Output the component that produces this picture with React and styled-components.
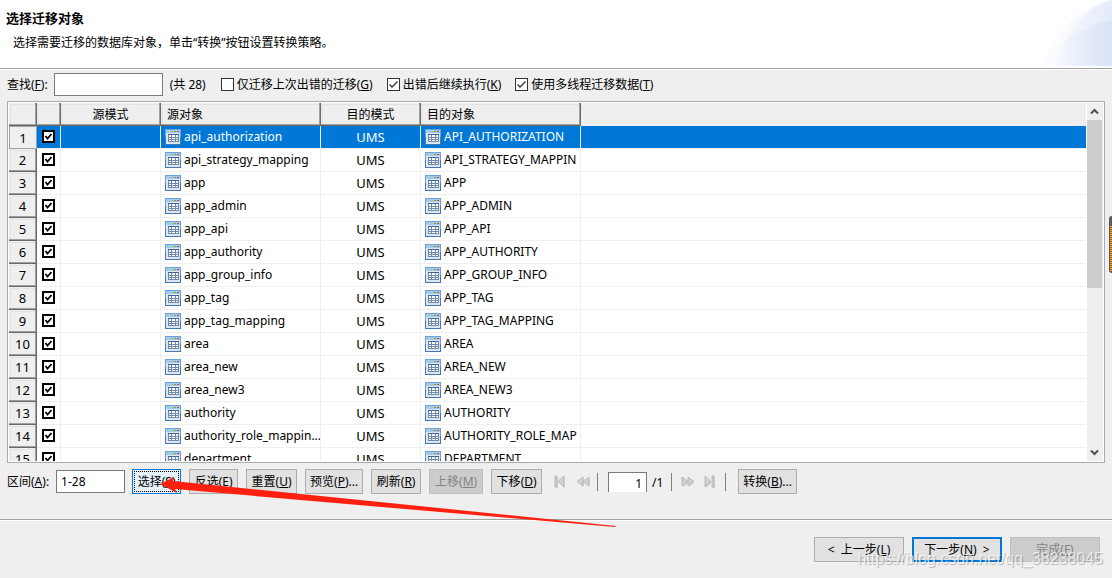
import React, { useState } from 'react'
import styled, { createGlobalStyle, css } from 'styled-components'

const GlobalStyle = createGlobalStyle`
    *, *::before, *::after {
        box-sizing: border-box;
    }

    body {
        margin: 0;
        background-color: #efefef;
        color: black;
        font-family: 'Noto Sans', 'Noto Sans CJK SC', sans-serif;
        font-size: 12px;
        line-height: 16px;
    }

    button, input {
        font: inherit;
        color: inherit;
        margin: 0;
    }
`;

const Wizard = styled.div`
    position: relative;
    display: flex;
    flex-direction: column;
    height: 100vh;
    overflow: hidden;
`;

const Banner = styled.header`
    display: flex;
    justify-content: space-between;
    height: 69px;
    flex: none;
    background-color: white;
    border-bottom: 1px solid #a0a0a0;
`;

const BannerText = styled.div`
    padding: 10px 0 0 6px;
`;

const Title = styled.h1`
    margin: 0 0 9px;
    font-size: 13px;
    line-height: 16px;
    font-weight: bold;
`;

const Subtitle = styled.p`
    margin: 0;
    padding-left: 7px;
`;

const FilterBar = styled.div`
    display: flex;
    align-items: center;
    flex: none;
    height: 32px;
    padding: 0 7px 2px;
    border-top: 1px solid white;
`;

const TextBox = styled.input`
    width: ${props => props.$w};
    height: 23px;
    margin: ${props => props.$margin};
    padding: 0 4px;
    border: 1px solid #7a7a7a;
    background-color: white;
    outline: none;
`;

const Count = styled.span`
    width: 51px;
`;

const CheckLabel = styled.label`
    display: flex;
    align-items: center;
    gap: 3px;
    margin-right: 14px;
    white-space: nowrap;
`;

const CheckBox = styled.span`
    display: grid;
    width: 13px;
    height: 13px;

    input, svg {
        grid-area: 1 / 1;
        width: 13px;
        height: 13px;
    }

    input {
        appearance: none;
        background-color: white;
        border: ${props => props.$heavy ? '2px solid black' : '1px solid #333'};
    }

    svg {
        pointer-events: none;
    }
`;

const GridPanel = styled.div`
    display: flex;
    flex: 1;
    min-height: 0;
    margin: 0 7px;
    padding: 1px;
    border: 1px solid #a9abb0;
    background-color: white;
`;

const GridView = styled.div`
    flex: 1;
    min-width: 0;
    overflow: hidden;
`;

const Table = styled.table`
    width: 100%;
    table-layout: fixed;
    border-collapse: separate;
    border-spacing: 0;
`;

const raised = css`
    background-color: #efefef;
    border-style: solid;
    border-width: 0 1px 1px 0;
    border-color: #696969;
    box-shadow: inset -1px -1px #a0a0a0, inset 1px 1px #efefef, inset 2px 2px #e3e3e3;
`;

const HeadCell = styled.th`
    height: 23px;
    padding: 2px 6px 0;
    font-weight: normal;
    text-align: ${props => props.$align || 'left'};
    ${props => props.$blank ? 'background-color: #efefef;' : raised}
`;

const Row = styled.tr`
    background-color: ${props => props.$selected ? '#0078d7' : 'white'};
    color: ${props => props.$selected ? 'white' : 'black'};
`;

const NumberCell = styled.th`
    height: 23px;
    padding: 0;
    color: black;
    font-size: 13px;
    font-weight: normal;
    line-height: 16px;
    ${raised}
    ${props => props.$selected && css`
        border-width: 1px;
        border-color: #a0a0a0;
        box-shadow: none;
    `}
`;

const Cell = styled.td`
    height: 23px;
    padding: 0;
    border-right: ${props => props.$last ? 'none' : '1px solid #efefef'};
    border-bottom: 1px solid #efefef;
    text-align: ${props => props.$align || 'left'};
    font-size: ${props => props.$size || '12px'};
    white-space: nowrap;
    overflow: hidden;
`;

const Tick = styled.div`
    padding: 0 0 1px 5px;
`;

const ObjectName = styled.div`
    display: flex;
    align-items: center;
    gap: 3px;
    padding-left: 4px;

    svg {
        flex: none;
    }
`;

const ScrollBar = styled.div`
    display: flex;
    flex-direction: column;
    width: 16px;
    margin: 0 0 0 1px;
    padding-right: 1px;
    background-color: #efefef;
`;

const ScrollButton = styled.button`
    display: grid;
    place-items: center;
    height: 17px;
    padding: 0;
    border: none;
    background: none;
`;

const ScrollTrack = styled.div`
    flex: 1;
`;

const ScrollThumb = styled.div`
    width: 15px;
    height: 52%;
    background-color: #cdcdcd;
`;

const ToolBar = styled.div`
    display: flex;
    align-items: center;
    flex: none;
    height: 56px;
    padding: 0 7px 19px;
`;

const ButtonGroup = styled.div`
    display: flex;
    gap: 8px;
`;

const Button = styled.button`
    width: ${props => props.$w};
    height: 25px;
    padding: 0;
    border: 1px solid #adadad;
    background-color: #e1e1e1;
    white-space: nowrap;

    ${props => props.$focused && css`
        border-color: #0078d7;
        background-color: #e5f1fb;
        outline: 1px dotted black;
        outline-offset: -3px;
    `}

    ${props => props.$primary && css`
        border: 2px solid #0078d7;
    `}

    &:disabled {
        border-color: #bfbfbf;
        background-color: #cccccc;
        color: #838383;
    }
`;

const Pager = styled.div`
    display: flex;
    align-items: center;
    margin: 0 12px 0 7px;
`;

const PagerButton = styled.button`
    display: grid;
    place-items: center;
    width: 23px;
    height: 20px;
    padding: 0;
    border: none;
    background: none;
`;

const Divider = styled.span`
    width: 1px;
    height: 18px;
    margin: ${props => props.$margin};
    background-color: #808080;
`;

const PageBox = styled.input`
    width: 39px;
    height: 20px;
    padding: 2px 4px 0;
    border: 1px solid #7a7a7a;
    border-bottom: none;
    background-color: white;
    text-align: right;
    outline: none;
`;

const PageTotal = styled.span`
    width: 24px;
    padding: 2px 0 0 5px;
`;

const Footer = styled.footer`
    display: flex;
    justify-content: flex-end;
    flex: none;
    gap: 8px;
    height: 59px;
    padding: 17px 12px 0;
    border-top: 1px solid #a0a0a0;
    box-shadow: inset 0 1px white;
`;

const PointerArrow = styled.svg`
    position: absolute;
    left: 160px;
    bottom: 50px;
    pointer-events: none;
`;

const Watermark = styled.div`
    position: absolute;
    right: 9px;
    bottom: 9px;
    font-family: 'Liberation Sans', sans-serif;
    font-size: 16px;
    line-height: 20px;
    color: rgba(255, 255, 255, 0.7);
    text-shadow: 1px 1px 1px rgba(0, 0, 0, 0.25);
    pointer-events: none;
`;

const SideMeter = styled.div`
    position: absolute;
    right: 0;
    top: 216px;
    width: 3px;
    height: 57px;
    padding: 10px 0 2px 1px;
    border-radius: 3px 0 0 3px;
    background-color: #5a5a5a;

    &::before {
        content: '';
        display: block;
        height: 100%;
        background: repeating-linear-gradient(#ff9a1a 0 1px, #8a6a35 1px 2px);
    }
`;

function BannerArt() {
    return (
        <svg width="74" height="66" viewBox="0 0 74 66" aria-hidden="true">
            <defs>
                <linearGradient id="fade" x1="14" x2="74" y1="0" y2="0" gradientUnits="userSpaceOnUse">
                    <stop offset="0" stopColor="#c9d7f2" stopOpacity="0" />
                    <stop offset="1" stopColor="#c9d7f2" stopOpacity="0.38" />
                </linearGradient>
                <linearGradient id="haze" x1="0" x2="74" y1="0" y2="0" gradientUnits="userSpaceOnUse">
                    <stop offset="0" stopColor="#e8eefb" stopOpacity="0.1" />
                    <stop offset="1" stopColor="#e8eefb" stopOpacity="0.5" />
                </linearGradient>
            </defs>
            <path d="M2 66C14 36 38 8 74 0V66Z" fill="url(#haze)" />
            <path d="M18 66C26 36 44 10 70 1L74 0V66Z" fill="url(#fade)" />
            <path d="M2 66C20 42 44 25 74 21V66Z" fill="url(#fade)" />
        </svg>
    )
}

function TableIcon() {
    return (
        <svg width="16" height="16" viewBox="0 0 16 16" aria-hidden="true" shapeRendering="crispEdges">
            <rect width="16" height="8" fill="#6fa3d8" />
            <rect y="8" width="16" height="8" fill="#4478b2" />
            <rect x="1" y="1" width="14" height="3" fill="#9fcaf2" />
            <rect x="1" y="4" width="14" height="11" fill="#dfe5ec" />
            <rect x="6" y="2" width="2" height="1" fill="#d9b93a" />
            <rect x="9" y="2" width="2" height="1" fill="#6aa84f" />
            <rect x="12" y="2" width="2" height="1" fill="#e03a2e" />
            <rect x="3" y="5" width="11" height="8" fill="#6d89ab" />
            <rect x="3" y="5" width="11" height="1" fill="#3d679c" />
            <path d="M4 6h2v2H4zM7 6h3v2H7zM11 6h2v2h-2zM4 9h2v1H4zM7 9h3v1H7zM11 9h2v1h-2zM4 11h2v1H4zM7 11h3v1H7zM11 11h2v1h-2z" fill="white" />
        </svg>
    )
}

function Check({ id, label, heavy, defaultChecked }) {

    const [checked, setChecked] = useState(!!defaultChecked);

    return (
        <CheckBox $heavy={heavy}>
            <input id={id} type="checkbox" aria-label={label} checked={checked} onChange={() => setChecked(!checked)} />
            {checked && (
                <svg viewBox="0 0 13 13">
                    {heavy
                        ? <path d="M3.5 6L5.5 8.5L9.5 4" fill="none" stroke="black" strokeWidth="1.8" />
                        : <path d="M2.5 6.5L5 9L10.5 3.5" fill="none" stroke="#333" strokeWidth="1.3" />}
                </svg>
            )}
        </CheckBox>
    )
}

function Chevron({ d }) {
    return (
        <svg width="9" height="7" viewBox="0 0 9 7" aria-hidden="true">
            <path d={d} fill="none" stroke="#505050" strokeWidth="2" />
        </svg>
    )
}

// page arrows, all of them greyed out while there is one page only
const pagerPaths = {
    first: 'M1 1h2v11H1zM10 1v11L4 6.5z',
    prev: 'M6 2v9L0 6.5zM12 2v9L6 6.5z',
    next: 'M1 2v9l6-4.5zM7 2v9l6-4.5z',
    last: 'M1 1v11l6-5.5zM8 1h2v11H8z',
};

function PageArrow({ kind, label }) {
    return (
        <PagerButton disabled aria-label={label}>
            <svg width="13" height="14" viewBox="0 0 13 14" aria-hidden="true">
                <path d={pagerPaths[kind]} transform="translate(1 1)" fill="#d8d8d8" />
                <path d={pagerPaths[kind]} fill="#d0d0d0" stroke="#b0b0b0" strokeWidth="0.8" />
            </svg>
        </PagerButton>
    )
}

const options = [
    { id: 'failed', text: '仅迁移上次出错的迁移', hotkey: 'G', checked: false },
    { id: 'continue', text: '出错后继续执行', hotkey: 'K', checked: true },
    { id: 'threads', text: '使用多线程迁移数据', hotkey: 'T', checked: true },
];

const rows = [
    ['api_authorization', 'API_AUTHORIZATION'],
    ['api_strategy_mapping', 'API_STRATEGY_MAPPIN'],
    ['app', 'APP'],
    ['app_admin', 'APP_ADMIN'],
    ['app_api', 'APP_API'],
    ['app_authority', 'APP_AUTHORITY'],
    ['app_group_info', 'APP_GROUP_INFO'],
    ['app_tag', 'APP_TAG'],
    ['app_tag_mapping', 'APP_TAG_MAPPING'],
    ['area', 'AREA'],
    ['area_new', 'AREA_NEW'],
    ['area_new3', 'AREA_NEW3'],
    ['authority', 'AUTHORITY'],
    ['authority_role_mappin...', 'AUTHORITY_ROLE_MAP'],
    ['department', 'DEPARTMENT'],
];

const actions = [
    { text: '选择', hotkey: 'S', w: '49px', focused: true },
    { text: '反选', hotkey: 'E', w: '49px' },
    { text: '重置', hotkey: 'U', w: '51px' },
    { text: '预览', hotkey: 'P', w: '58px', more: true },
    { text: '刷新', hotkey: 'R', w: '50px' },
    { text: '上移', hotkey: 'M', w: '54px', disabled: true },
    { text: '下移', hotkey: 'D', w: '51px' },
];

function ObjectTable() {

    const [selected, setSelected] = useState(0);

    return (
        <Table>
            <colgroup>
                <col style={{ width: 28 }} />
                <col style={{ width: 24 }} />
                <col style={{ width: 100 }} />
                <col style={{ width: 160 }} />
                <col style={{ width: 100 }} />
                <col style={{ width: 160 }} />
                <col />
            </colgroup>
            <thead>
                <tr>
                    <HeadCell />
                    <HeadCell />
                    <HeadCell $align="center">源模式</HeadCell>
                    <HeadCell>源对象</HeadCell>
                    <HeadCell $align="center">目的模式</HeadCell>
                    <HeadCell>目的对象</HeadCell>
                    <HeadCell $blank />
                </tr>
            </thead>
            <tbody>
                {rows.map(([source, target], i) => (
                    <Row key={source} $selected={i === selected} onClick={() => setSelected(i)}>
                        <NumberCell $selected={i === selected}>{i + 1}</NumberCell>
                        <Cell><Tick><Check heavy defaultChecked label={source} /></Tick></Cell>
                        <Cell />
                        <Cell><ObjectName><TableIcon />{source}</ObjectName></Cell>
                        <Cell $align="center" $size="13px">UMS</Cell>
                        <Cell><ObjectName><TableIcon />{target}</ObjectName></Cell>
                        <Cell $last />
                    </Row>
                ))}
            </tbody>
        </Table>
    )
}

function App() {
    return (
        <Wizard>
            <GlobalStyle />
            <Banner>
                <BannerText>
                    <Title>选择迁移对象</Title>
                    <Subtitle>选择需要迁移的数据库对象，单击“转换”按钮设置转换策略。</Subtitle>
                </BannerText>
                <BannerArt />
            </Banner>

            <FilterBar>
                <label htmlFor="find">查找(<u>F</u>):</label>
                <TextBox id="find" $w="109px" $margin="0 7px 0 6px" />
                <Count>(共 28)</Count>
                {options.map(o => (
                    <CheckLabel key={o.id} htmlFor={o.id}>
                        <Check id={o.id} defaultChecked={o.checked} />
                        <span>{o.text}(<u>{o.hotkey}</u>)</span>
                    </CheckLabel>
                ))}
            </FilterBar>

            <GridPanel>
                <GridView>
                    <ObjectTable />
                </GridView>
                <ScrollBar>
                    <ScrollButton aria-label="向上"><Chevron d="M1 5.5L4.5 2L8 5.5" /></ScrollButton>
                    <ScrollTrack><ScrollThumb /></ScrollTrack>
                    <ScrollButton aria-label="向下"><Chevron d="M1 1.5L4.5 5L8 1.5" /></ScrollButton>
                </ScrollBar>
            </GridPanel>

            <ToolBar>
                <label htmlFor="range">区间(<u>A</u>):</label>
                <TextBox id="range" $w="69px" $margin="0 7px" defaultValue="1-28" />
                <ButtonGroup>
                    {actions.map(a => (
                        <Button key={a.hotkey} $w={a.w} $focused={a.focused} disabled={a.disabled}>
                            {a.text}(<u>{a.hotkey}</u>){a.more && '...'}
                        </Button>
                    ))}
                </ButtonGroup>
                <Pager>
                    <PageArrow kind="first" label="首页" />
                    <PageArrow kind="prev" label="上一页" />
                    <Divider $margin="0 10px 0 2px" />
                    <PageBox aria-label="页码" defaultValue="1" />
                    <PageTotal>/1</PageTotal>
                    <Divider $margin="0 4px 0 0" />
                    <PageArrow kind="next" label="下一页" />
                    <PageArrow kind="last" label="末页" />
                    <Divider $margin="0 0 0 3px" />
                </Pager>
                <Button $w="59px">转换(<u>B</u>)...</Button>
            </ToolBar>

            <Footer>
                <Button $w="90px">&lt;&nbsp; 上一步(<u>L</u>)</Button>
                <Button $w="90px" $primary>下一步(<u>N</u>)&nbsp; &gt;</Button>
                <Button $w="90px" disabled>完成(<u>F</u>)</Button>
            </Footer>

            <PointerArrow width="456" height="52" viewBox="160 476 456 52" aria-hidden="true">
                <path d="M160 484L174 477L173 481L370 501L616 526L615 527L370 506L175 489L177 493Z" fill="#ff2010" />
            </PointerArrow>
            <Watermark>https://blog.csdn.net/qq_38238045</Watermark>
            <SideMeter />
        </Wizard>
    )
}

export default App
